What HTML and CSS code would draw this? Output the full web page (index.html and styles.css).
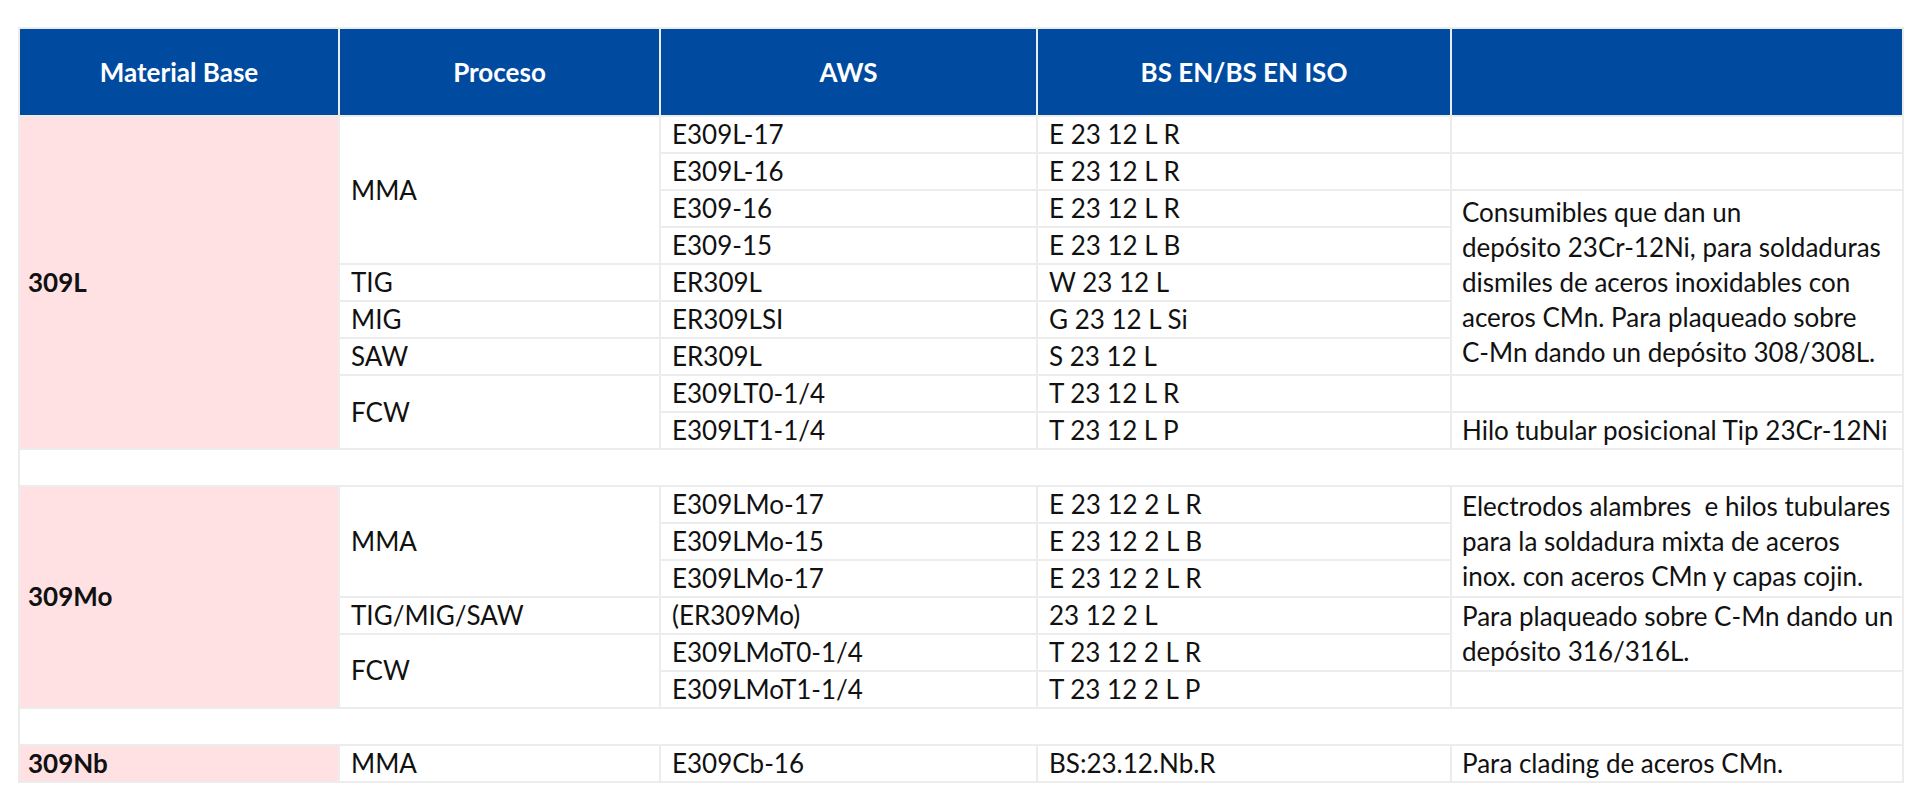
FILE: index.html
```html
<!DOCTYPE html>
<html lang="es">
<head>
<meta charset="utf-8">
<title>Material Base 309</title>
<link rel="stylesheet" href="styles.css">
</head>
<body>
<div class="wrap">
<table class="spec">
  <colgroup>
    <col class="c1"><col class="c2"><col class="c3"><col class="c4"><col class="c5">
  </colgroup>
  <thead>
    <tr>
      <th>Material Base</th>
      <th>Proceso</th>
      <th>AWS</th>
      <th>BS EN/BS EN ISO</th>
      <th></th>
    </tr>
  </thead>
  <tbody>
    <tr>
      <td class="mat" rowspan="9">309L</td>
      <td rowspan="4">MMA</td>
      <td class="code">E309L-17</td>
      <td class="code">E 23 12 L R</td>
      <td class="note"></td>
    </tr>
    <tr>
      <td class="code">E309L-16</td>
      <td class="code">E 23 12 L R</td>
      <td class="note"></td>
    </tr>
    <tr>
      <td class="code">E309-16</td>
      <td class="code">E 23 12 L R</td>
      <td class="note" rowspan="5">Consumibles que dan un<br>depósito 23Cr-12Ni, para soldaduras<br>dismiles de aceros inoxidables con<br>aceros CMn. Para plaqueado sobre<br>C-Mn dando un depósito 308/308L.</td>
    </tr>
    <tr>
      <td class="code">E309-15</td>
      <td class="code">E 23 12 L B</td>
    </tr>
    <tr>
      <td>TIG</td>
      <td class="code">ER309L</td>
      <td class="code">W 23 12 L</td>
    </tr>
    <tr>
      <td>MIG</td>
      <td class="code">ER309LSI</td>
      <td class="code">G 23 12 L Si</td>
    </tr>
    <tr>
      <td>SAW</td>
      <td class="code">ER309L</td>
      <td class="code">S 23 12 L</td>
    </tr>
    <tr>
      <td rowspan="2">FCW</td>
      <td class="code">E309LT0-1/4</td>
      <td class="code">T 23 12 L R</td>
      <td class="note"></td>
    </tr>
    <tr>
      <td class="code">E309LT1-1/4</td>
      <td class="code">T 23 12 L P</td>
      <td class="note">Hilo tubular posicional Tip 23Cr-12Ni</td>
    </tr>
    <tr class="spacer"><td colspan="5"></td></tr>
    <tr>
      <td class="mat" rowspan="6">309Mo</td>
      <td rowspan="3">MMA</td>
      <td class="code">E309LMo-17</td>
      <td class="code">E 23 12 2 L R</td>
      <td class="note" rowspan="3">Electrodos alambres&nbsp; e hilos tubulares<br>para la soldadura mixta de aceros<br>inox. con aceros CMn y capas cojin.</td>
    </tr>
    <tr>
      <td class="code">E309LMo-15</td>
      <td class="code">E 23 12 2 L B</td>
    </tr>
    <tr>
      <td class="code">E309LMo-17</td>
      <td class="code">E 23 12 2 L R</td>
    </tr>
    <tr>
      <td>TIG/MIG/SAW</td>
      <td class="code">(ER309Mo)</td>
      <td class="code">23 12 2 L</td>
      <td class="note" rowspan="2">Para plaqueado sobre C-Mn dando un<br>depósito 316/316L.</td>
    </tr>
    <tr>
      <td rowspan="2">FCW</td>
      <td class="code">E309LMoT0-1/4</td>
      <td class="code">T 23 12 2 L R</td>
    </tr>
    <tr>
      <td class="code">E309LMoT1-1/4</td>
      <td class="code">T 23 12 2 L P</td>
      <td class="note"></td>
    </tr>
    <tr class="spacer"><td colspan="5"></td></tr>
    <tr>
      <td class="mat">309Nb</td>
      <td>MMA</td>
      <td class="code">E309Cb-16</td>
      <td class="code">BS:23.12.Nb.R</td>
      <td class="note">Para clading de aceros CMn.</td>
    </tr>
  </tbody>
</table>
</div>
</body>
</html>
```

FILE: styles.css
```css
html, body {
  margin: 0;
  padding: 0;
  background: #ffffff;
}

body {
  font-family: Lato, "Noto Sans", sans-serif;
  color: #111111;
}

.wrap {
  padding: 27px 18px 0 18px;
}

.spec {
  width: 1884px;
  border-collapse: collapse;
  table-layout: fixed;
  font-size: 26px;
}

.c1 { width: 320px; }
.c2 { width: 321px; }
.c3 { width: 377px; }
.c4 { width: 414px; }
.c5 { width: 452px; }

.spec thead tr {
  height: 88px;
}

.spec th {
  background: #004a9f;
  color: #ffffff;
  font-weight: 700;
  font-size: 26px;
  text-align: center;
  vertical-align: middle;
  border: 2px solid #ececec;
  padding: 0 10px;
}

.spec tbody tr {
  height: 36.8px;
}

.spec td {
  border: 2px solid #ececec;
  padding: 0 11px;
  line-height: 35px;
  vertical-align: middle;
  white-space: nowrap;
  overflow: visible;
}

.spec td.mat {
  background: #ffe1e3;
  font-weight: 700;
  padding-left: 8px;
}

.spec td.code {
  padding-left: 11px;
}

.spec td.note {
  padding-left: 10px;
  padding-right: 0;
}
```
